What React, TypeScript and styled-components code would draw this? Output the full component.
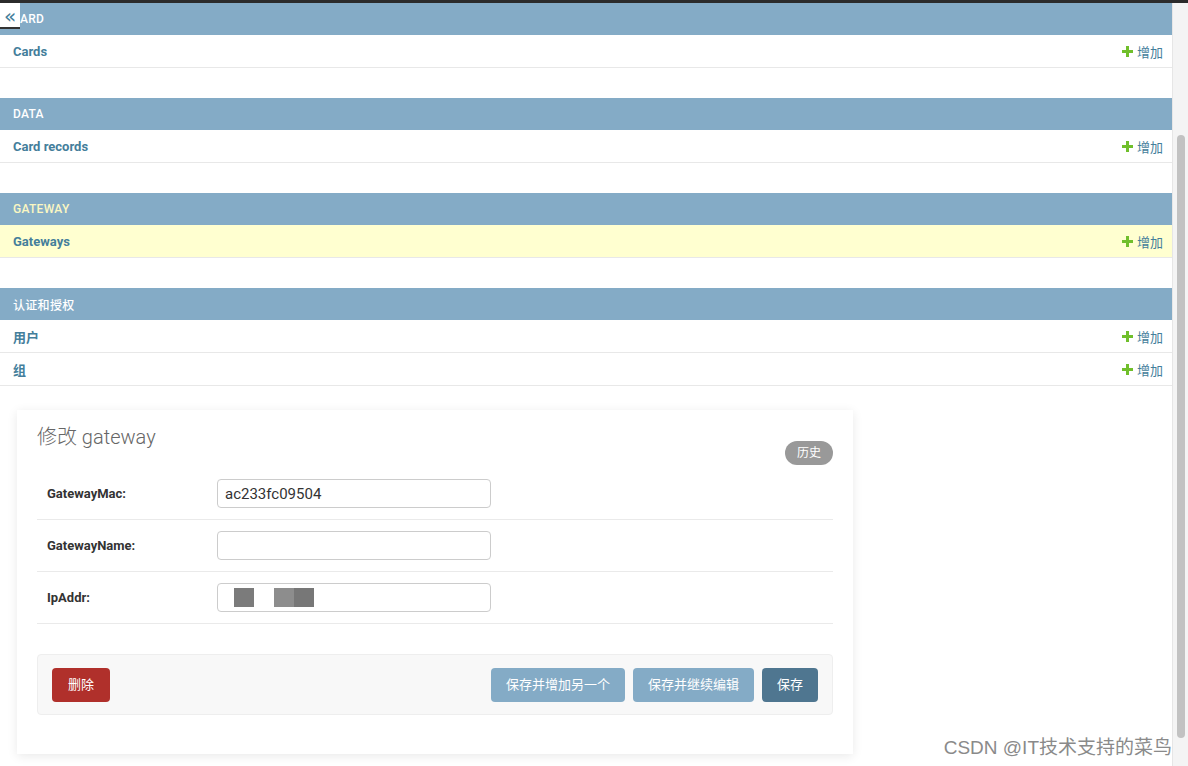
import React from "react";
import styled, { createGlobalStyle } from "styled-components";

const GlobalStyle = createGlobalStyle`
  html, body {
    margin: 0;
    padding: 0;
    background: #fff;
    font-family: Roboto, "Noto Sans CJK SC", sans-serif;
    overflow: hidden;
  }
`;

const Frame = styled.div`
  width: 1188px;
  height: 766px;
  border-top: 3px solid #2b2b2b;
  box-sizing: border-box;
  display: flex;
  overflow: hidden;
`;

const Main = styled.div`
  flex: 1;
  position: relative;
  display: flex;
  flex-direction: column;
`;

const ScrollTrack = styled.div`
  width: 16px;
  background: #f4f4f4;
  border-left: 1px solid #e6e6e6;
  padding: 132px 0 28px;
  box-sizing: border-box;
  display: flex;
  justify-content: center;
`;

const ScrollThumb = styled.div`
  width: 8px;
  height: 100%;
  border-radius: 4px;
  background: #c2c2c2;
`;

const Nav = styled.nav`
  background: #fff;
`;

const Module = styled.div`
  margin-bottom: 30px;
  &:last-child {
    margin-bottom: 0;
  }
`;

const Caption = styled.div<{ $current?: boolean; $indent?: number }>`
  height: 32px;
  display: flex;
  align-items: center;
  padding-left: ${(p) => p.$indent ?? 13}px;
  background: #84abc6;
  color: ${(p) => (p.$current ? "#fbf7c2" : "#fff")};
  font-size: 12px;
  font-weight: 500;
  letter-spacing: 0.3px;
`;

const Row = styled.div<{ $current?: boolean }>`
  height: 32px;
  display: flex;
  align-items: center;
  justify-content: space-between;
  padding: 0 9px 0 13px;
  border-bottom: 1px solid #e8e8e8;
  background: ${(p) => (p.$current ? "#ffffd0" : "#fff")};
  font-size: 13px;
`;

const ModelLink = styled.span`
  color: #447e9b;
  font-weight: 700;
`;

const AddLink = styled.span`
  display: flex;
  align-items: center;
  gap: 4px;
  color: #447e9b;
  font-size: 13px;
`;

const Toggle = styled.div`
  position: absolute;
  left: 0;
  top: 0;
  width: 20px;
  height: 26px;
  background: #fff;
  border-bottom: 2px solid #333;
  box-sizing: border-box;
  color: #447e9b;
  font-size: 20px;
  line-height: 27px;
  text-align: center;
  font-family: "DejaVu Sans", sans-serif;
`;

const Content = styled.div`
  flex: 1;
  padding: 24px 0 0 17px;
`;

const Card = styled.div`
  width: 836px;
  height: 344px;
  background: #fff;
  box-shadow: 0 2px 10px rgba(0, 0, 0, 0.09);
  padding: 2px 20px 0;
  box-sizing: border-box;
`;

const TitleBar = styled.div`
  display: flex;
  justify-content: space-between;
  align-items: flex-start;
`;

const Title = styled.h1`
  margin: 9px 0 0;
  font-size: 20px;
  font-weight: 300;
  color: #666;
`;

const HistoryBtn = styled.span`
  margin-top: 29px;
  padding: 0 12px;
  height: 24px;
  line-height: 24px;
  border-radius: 12px;
  background: #999;
  color: #fff;
  font-size: 12px;
`;

const Fieldset = styled.div`
  margin-top: 3px;
`;

const FormRow = styled.div`
  height: 51px;
  display: flex;
  align-items: center;
  border-bottom: 1px solid #eaeaea;
`;

const Label = styled.label`
  width: 170px;
  padding-left: 10px;
  font-size: 13px;
  font-weight: 700;
  color: #333;
`;

const Input = styled.div`
  position: relative;
  width: 274px;
  height: 29px;
  border: 1px solid #ccc;
  border-radius: 4px;
  box-sizing: border-box;
  padding-left: 7px;
  display: flex;
  align-items: center;
  font-size: 15px;
  color: #333;
`;

const Blot = styled.span<{ $c: string }>`
  width: 20px;
  height: 19px;
  background: ${(p) => p.$c};
`;

const Gap = styled.span<{ $w?: number }>`
  width: ${(p) => p.$w ?? 20}px;
`;

const SubmitRow = styled.div`
  margin-top: 30px;
  height: 61px;
  background: #f8f8f8;
  border: 1px solid #eee;
  border-radius: 4px;
  box-sizing: border-box;
  display: flex;
  align-items: center;
  padding: 0 14px;
  gap: 8px;
`;

const Button = styled.span<{ $bg: string; $pad?: number }>`
  height: 34px;
  line-height: 34px;
  padding: 0 ${(p) => p.$pad ?? 15}px;
  border-radius: 4px;
  background: ${(p) => p.$bg};
  color: #fff;
  font-size: 13px;
`;

const Spacer = styled.div`
  flex: 1;
`;

const Watermark = styled.div`
  position: absolute;
  right: 0;
  bottom: 7px;
  font-family: "Liberation Sans", "Noto Sans CJK SC", sans-serif;
  font-size: 19px;
  color: #8a8a8a;
`;

const Plus = () => (
  <svg width="11" height="11" viewBox="0 0 11 11">
    <path d="M4 0h3v4h4v3H7v4H4V7H0V4h4z" fill="#70bf2b" />
  </svg>
);

const modules = [
  { caption: "ARD", items: ["Cards"], indent: 20 },
  { caption: "DATA", items: ["Card records"] },
  { caption: "GATEWAY", items: ["Gateways"], current: true },
  { caption: "认证和授权", items: ["用户", "组"] },
];

export default function App() {
  return (
    <>
      <GlobalStyle />
      <Frame>
        <Main>
          <Nav>
            {modules.map((m) => (
              <Module key={m.caption}>
                <Caption $current={m.current} $indent={m.indent}>
                  {m.caption}
                </Caption>
                {m.items.map((it) => (
                  <Row key={it} $current={m.current}>
                    <ModelLink>{it}</ModelLink>
                    <AddLink>
                      <Plus />
                      增加
                    </AddLink>
                  </Row>
                ))}
              </Module>
            ))}
          </Nav>
          <Toggle>«</Toggle>
          <Content>
            <Card>
              <TitleBar>
                <Title>修改 gateway</Title>
                <HistoryBtn>历史</HistoryBtn>
              </TitleBar>
              <Fieldset>
                <FormRow>
                  <Label>GatewayMac:</Label>
                  <Input>ac233fc09504</Input>
                </FormRow>
                <FormRow>
                  <Label>GatewayName:</Label>
                  <Input />
                </FormRow>
                <FormRow>
                  <Label>IpAddr:</Label>
                  <Input>
                    <Gap $w={9} />
                    <Blot $c="#7b7b7b" />
                    <Gap />
                    <Blot $c="#8d8d8d" />
                    <Blot $c="#777" />
                  </Input>
                </FormRow>
              </Fieldset>
              <SubmitRow>
                <Button $bg="#b0302b" $pad={16}>
                  删除
                </Button>
                <Spacer />
                <Button $bg="#84abc6">保存并增加另一个</Button>
                <Button $bg="#84abc6">保存并继续编辑</Button>
                <Button $bg="#4f7690">保存</Button>
              </SubmitRow>
            </Card>
          </Content>
          <Watermark>CSDN @IT技术支持的菜鸟</Watermark>
        </Main>
        <ScrollTrack>
          <ScrollThumb />
        </ScrollTrack>
      </Frame>
    </>
  );
}
